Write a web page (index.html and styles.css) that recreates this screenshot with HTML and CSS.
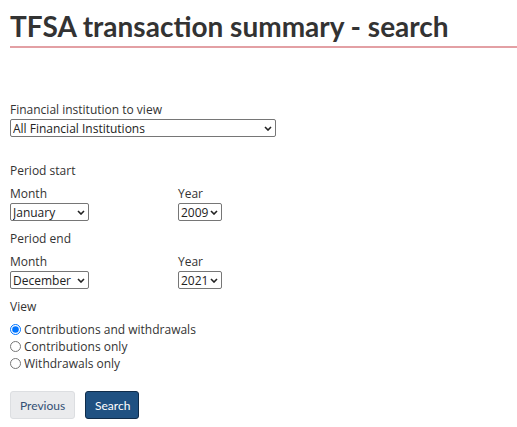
FILE: index.html
```html
<!DOCTYPE html>
<html lang="en">
<head>
<meta charset="utf-8">
<title>TFSA transaction summary - search</title>
<link rel="stylesheet" href="styles.css">
</head>
<body>
<h1 class="title">TFSA transaction summary - search</h1>
<form class="form">
  <div class="field fi">
    <label class="label" for="fi">Financial institution to view</label>
    <span class="sel-wrap">
      <select id="fi" class="sel sel-fi"><option>All Financial Institutions</option></select>
      <svg class="chev" width="8" height="5" viewBox="0 0 8 5"><polyline points="1,1 4,4 7,1" fill="none" stroke="#222" stroke-width="1.6"/></svg>
    </span>
  </div>

  <div class="group-label gl-start">Period start</div>
  <div class="period">
    <div class="field">
      <label class="label">Month</label>
      <span class="sel-wrap">
        <select class="sel sel-month"><option>January</option></select>
        <svg class="chev" width="8" height="5" viewBox="0 0 8 5"><polyline points="1,1 4,4 7,1" fill="none" stroke="#222" stroke-width="1.6"/></svg>
      </span>
    </div>
    <div class="field">
      <label class="label">Year</label>
      <span class="sel-wrap">
        <select class="sel sel-year"><option>2009</option></select>
        <svg class="chev" width="8" height="5" viewBox="0 0 8 5"><polyline points="1,1 4,4 7,1" fill="none" stroke="#222" stroke-width="1.6"/></svg>
      </span>
    </div>
  </div>

  <div class="group-label gl-end">Period end</div>
  <div class="period">
    <div class="field">
      <label class="label">Month</label>
      <span class="sel-wrap">
        <select class="sel sel-month"><option>December</option></select>
        <svg class="chev" width="8" height="5" viewBox="0 0 8 5"><polyline points="1,1 4,4 7,1" fill="none" stroke="#222" stroke-width="1.6"/></svg>
      </span>
    </div>
    <div class="field">
      <label class="label">Year</label>
      <span class="sel-wrap">
        <select class="sel sel-year"><option>2021</option></select>
        <svg class="chev" width="8" height="5" viewBox="0 0 8 5"><polyline points="1,1 4,4 7,1" fill="none" stroke="#222" stroke-width="1.6"/></svg>
      </span>
    </div>
  </div>

  <div class="group-label gl-view">View</div>
  <div class="radios">
    <label class="radio"><input type="radio" name="v" checked> Contributions and withdrawals</label>
    <label class="radio"><input type="radio" name="v"> Contributions only</label>
    <label class="radio"><input type="radio" name="v"> Withdrawals only</label>
  </div>

  <div class="buttons">
    <button type="button" class="btn btn-default">Previous</button>
    <button type="button" class="btn btn-primary">Search</button>
  </div>
</form>
</body>
</html>
```
FILE: styles.css
```css
html, body {
  margin: 0;
  padding: 0;
  background: #fff;
}
body {
  font-family: "Open Sans", "Noto Sans", sans-serif;
  font-size: 12px;
  color: #333;
  padding-left: 10px;
}
.title {
  font-family: Lato, "Liberation Sans", sans-serif;
  font-weight: 700;
  font-size: 28px;
  line-height: 36px;
  color: #333;
  margin: 8px 0 0 0;
  padding-bottom: 2px;
  border-bottom: 2px solid #e3a0a4;
}
.form {
  display: flex;
  flex-direction: column;
}
.field {
  display: flex;
  flex-direction: column;
  align-items: flex-start;
}
.fi { margin-top: 54px; }
.label {
  line-height: 16px;
}
.sel-wrap {
  position: relative;
  display: inline-flex;
  margin-top: 1px;
}
.sel {
  -webkit-appearance: none;
  appearance: none;
  font-family: "Open Sans", "Noto Sans", sans-serif;
  font-size: 12px;
  color: #222;
  height: 18px;
  margin: 0;
  padding: 0 0 0 2px;
  border: 1px solid #767676;
  border-radius: 2px;
  background: #fff;
}
.chev {
  position: absolute;
  right: 4px;
  top: 7px;
  pointer-events: none;
}
.sel-fi { width: 266px; }
.sel-month { width: 79px; }
.sel-year { width: 44px; }
.group-label { line-height: 16px; }
.gl-start { margin-top: 26px; }
.gl-end { margin-top: 10px; }
.gl-view { margin-top: 10px; }
.period {
  display: grid;
  grid-template-columns: 168px auto;
  margin-top: 7px;
}
.radios {
  display: flex;
  flex-direction: column;
  margin-top: 6px;
}
.radio {
  display: flex;
  align-items: center;
  line-height: 17px;
}
.radio input {
  margin: 0 3px 0 0;
  width: 11px;
  height: 11px;
}
.buttons {
  display: flex;
  gap: 10px;
  margin-top: 19px;
}
.btn {
  font-family: Lato, "Liberation Sans", sans-serif;
  font-size: 12px;
  height: 28px;
  padding: 0 9px;
  border-radius: 3px;
  cursor: pointer;
}
.btn-default {
  background: #eaebed;
  border: 1px solid #dcdee1;
  color: #335075;
  width: 65px;
}
.btn-primary {
  background: #1f5182;
  border: 1px solid #0f2c4a;
  color: #fff;
  width: 54px;
}
```
